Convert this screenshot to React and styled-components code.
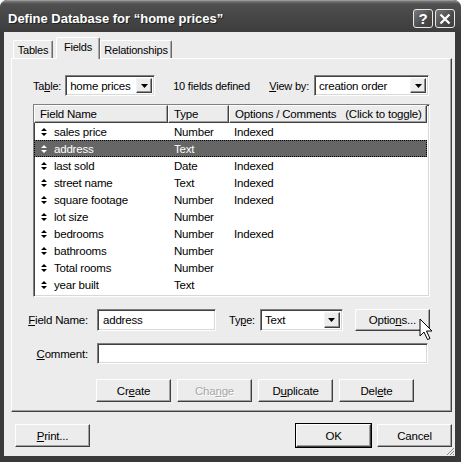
import React from "react";
import styled, { createGlobalStyle, css } from "styled-components";

const Global = createGlobalStyle`
  html, body { margin: 0; padding: 0; background: #ffffff; }
  body { font-family: "Liberation Sans", Arial, sans-serif; }
  * { box-sizing: border-box; }
`;

const FONT = `font-family: "Liberation Sans", Arial, sans-serif; font-size: 11px; letter-spacing: -0.2px; color: #000;`;

const Window = styled.div`
  width: 461px;
  height: 462px;
  background: #3a3a3a;
  border-radius: 7px 7px 0 0;
  display: flex;
  flex-direction: column;
  overflow: hidden;
`;

const TitleBar = styled.div`
  height: 32px;
  flex: none;
  display: flex;
  align-items: flex-start;
  justify-content: space-between;
  padding: 8px 6px 0 8px;
  background: linear-gradient(#7a7a7a 0px, #505050 3px, #474747 14px, #3f3f3f 28px, #3a3a3a 32px);
  border-radius: 7px 7px 0 0;
  border-top: 1px solid #9a9a9a;
`;

const TitleText = styled.div`
  font-family: "Liberation Sans", Arial, sans-serif;
  font-weight: bold;
  font-size: 13px;
  color: #fff;
  line-height: 19px;
  text-shadow: 1px 1px 0 #222;
`;

const TitleButtons = styled.div`
  display: flex;
  gap: 2px;
`;

const CaptionButton = styled.div`
  width: 20px;
  height: 19px;
  border: 1px solid #e8e8e8;
  border-radius: 3px;
  background: linear-gradient(135deg, #7a7a7a, #4a4a4a 60%, #3e3e3e);
  display: flex;
  align-items: center;
  justify-content: center;
  color: #fff;
  font-family: "Liberation Sans", Arial, sans-serif;
  font-weight: bold;
  font-size: 15px;
`;

const Body = styled.div`
  flex: 1;
  margin: 0 6px 6px 4px;
  background: #ececec;
  padding: 5px 3px 9px 7px;
  display: flex;
  flex-direction: column;
  position: relative;
`;

const TabStrip = styled.div`
  height: 21px;
  display: flex;
  align-items: flex-end;
  padding-left: 2px;
  position: relative;
  z-index: 2;
`;

const Tab = styled.div`
  ${FONT}
  height: ${(p) => (p.$active ? "22px" : "18px")};
  margin-bottom: ${(p) => (p.$active ? "-1px" : "0")};
  width: ${(p) => p.$w}px;
  margin-left: ${(p) => p.$ml || 0}px;
  background: #ececec;
  border-top: 1px solid #fff;
  border-left: 1px solid #fff;
  border-right: 1px solid #6a6a6a;
  box-shadow: inset -1px 0 #a8a8a8;
  border-radius: 2px 2px 0 0;
  display: flex;
  justify-content: center;
  padding-top: ${(p) => (p.$active ? "3px" : "3px")};
  line-height: 13px;
`;

const Panel = styled.div`
  height: 354px;
  flex: none;
  border-top: 1px solid #fff;
  border-left: 1px solid #fff;
  border-right: 1px solid #404040;
  border-bottom: 1px solid #404040;
  box-shadow: inset -1px -1px #a0a0a0;
  padding: 16px 22px 0 21px;
  display: flex;
  flex-direction: column;
`;

const TopRow = styled.div`
  height: 21px;
  display: flex;
  align-items: center;
`;

const Label = styled.span`
  ${FONT}
  white-space: nowrap;
  margin-right: ${(p) => p.$mr || 0}px;
  margin-left: ${(p) => p.$ml || 0}px;
`;

const U = styled.span`
  text-decoration: underline;
  text-underline-offset: 1px;
`;

const Sunken = css`
  background: #fff;
  border: 1px solid;
  border-color: #808080 #ffffff #ffffff #808080;
  box-shadow: inset 1px 1px #404040, inset -1px -1px #d8d8d8;
`;

const Combo = styled.div`
  ${Sunken}
  width: ${(p) => p.$w}px;
  height: ${(p) => p.$h || 21}px;
  display: flex;
  align-items: center;
  padding: 2px 2px 2px 4px;
  margin-left: ${(p) => p.$ml || 0}px;
  flex: none;
`;

const ComboText = styled.span`
  ${FONT}
  font-size: 11.5px;
  flex: 1;
  white-space: nowrap;
`;

const DropButton = styled.div`
  width: 16px;
  height: 100%;
  background: #ececec;
  border: 1px solid;
  border-color: #f4f4f4 #404040 #404040 #f4f4f4;
  box-shadow: inset -1px -1px #909090;
  display: flex;
  align-items: center;
  justify-content: center;
`;

const Arrow = () => (
  <svg width="7" height="4" viewBox="0 0 7 4">
    <path d="M0 0 H7 L3.5 4 Z" fill="#000" />
  </svg>
);

const Spacer = styled.div`
  flex: 1;
`;

const ListBox = styled.div`
  ${Sunken}
  margin-top: 8px;
  width: 397px;
  height: 193px;
  padding: 0;
  overflow: hidden;
`;

const HeaderRow = styled.div`
  display: flex;
  height: 18px;
`;

const HeaderCell = styled.div`
  ${FONT}
  font-size: 11.5px;
  width: ${(p) => p.$w}px;
  background: #ececec;
  border: 1px solid;
  border-color: #fff #404040 #404040 #fff;
  box-shadow: inset -1px -1px #a0a0a0;
  padding-left: 5px;
  padding-top: 1px;
  line-height: 14px;
  white-space: nowrap;
`;

const Row = styled.div`
  display: flex;
  align-items: center;
  height: 17px;
  background: ${(p) => (p.$sel ? "#666666" : "transparent")};
  outline: ${(p) => (p.$sel ? "1px dotted #000" : "none")};
  outline-offset: -1px;
  margin-right: 2px;
`;

const Cell = styled.div`
  ${FONT}
  font-size: 11.5px;
  color: ${(p) => (p.$sel ? "#fff" : "#000")};
  width: ${(p) => p.$w}px;
  padding-left: ${(p) => p.$pl}px;
  white-space: nowrap;
  display: flex;
  align-items: center;
`;

const Mover = ({ color }) => (
  <svg width="6" height="8" viewBox="0 0 6 8" style={{ marginRight: 7 }}>
    <path d="M3 0 L6 3 H0 Z M0 5 H6 L3 8 Z" fill={color} />
  </svg>
);

const FormGrid = styled.div`
  display: grid;
  grid-template-columns: 64px auto;
  row-gap: 12px;
  margin-top: 12px;
`;

const FormLabel = styled.div`
  ${FONT}
  font-size: 11.5px;
  padding-right: 9px;
  display: flex;
  align-items: center;
  justify-content: flex-end;
  white-space: nowrap;
`;

const FieldLine = styled.div`
  display: flex;
  align-items: center;
  height: ${(p) => p.$h || 22}px;
`;

const TextInput = styled.div`
  ${Sunken}
  ${FONT}
  font-size: 11.5px;
  width: ${(p) => p.$w}px;
  height: ${(p) => p.$h}px;
  padding: 4px 0 0 5px;
  white-space: nowrap;
`;

const ButtonBase = styled.div`
  ${FONT}
  font-size: 11.5px;
  width: 75px;
  height: ${(p) => p.$h || 23}px;
  background: #ececec;
  border: 1px solid;
  border-color: #fff #404040 #404040 #fff;
  box-shadow: inset -1px -1px #a0a0a0;
  display: flex;
  align-items: center;
  justify-content: center;
  white-space: nowrap;
  position: relative;
  color: ${(p) => (p.$disabled ? "#a8a8a8" : "#000")};
  text-shadow: ${(p) => (p.$disabled ? "1px 1px 0 #fff" : "none")};
  ${(p) =>
    p.$default &&
    css`
      outline: 1px solid #000;
      outline-offset: 0;
    `}
  margin-left: ${(p) => p.$ml || 0}px;
`;

const ButtonRow = styled.div`
  display: flex;
  gap: 6px;
  margin-top: 15px;
  padding-left: 63px;
`;

const BottomRow = styled.div`
  margin-top: 12px;
  display: flex;
  justify-content: space-between;
  padding-left: 4px;
`;

const RightGroup = styled.div`
  display: flex;
  gap: 6px;
`;

const Pointer = styled.svg`
  position: absolute;
  left: 63px;
  top: 8px;
  z-index: 5;
`;

const Grip = styled.svg`
  position: absolute;
  right: 0;
  bottom: 0;
`;

const fields = [
  ["sales price", "Number", "Indexed"],
  ["address", "Text", ""],
  ["last sold", "Date", "Indexed"],
  ["street name", "Text", "Indexed"],
  ["square footage", "Number", "Indexed"],
  ["lot size", "Number", ""],
  ["bedrooms", "Number", "Indexed"],
  ["bathrooms", "Number", ""],
  ["Total rooms", "Number", ""],
  ["year built", "Text", ""],
];

export default function App() {
  return (
    <>
      <Global />
      <Window>
        <TitleBar>
          <TitleText>Define Database for “home prices”</TitleText>
          <TitleButtons>
            <CaptionButton>?</CaptionButton>
            <CaptionButton>
              <svg width="12" height="12" viewBox="0 0 12 12">
                <path d="M1.5 1.5 L10.5 10.5 M10.5 1.5 L1.5 10.5" stroke="#fff" strokeWidth="2.2" />
              </svg>
            </CaptionButton>
          </TitleButtons>
        </TitleBar>
        <Body>
          <TabStrip>
            <Tab $w={40}>Tables</Tab>
            <Tab $w={44} $ml={3} $active>Fields</Tab>
            <Tab $w={72}>Relationships</Tab>
          </TabStrip>
          <Panel>
            <TopRow>
              <Label $mr={4}>
                Ta<U>b</U>le:
              </Label>
              <Combo $w={90}>
                <ComboText>home prices</ComboText>
                <DropButton>
                  <Arrow />
                </DropButton>
              </Combo>
              <Label $ml={18}>10 fields defined</Label>
              <Spacer />
              <Label $mr={5}>
                <U>V</U>iew by:
              </Label>
              <Combo $w={115}>
                <ComboText>creation order</ComboText>
                <DropButton>
                  <Arrow />
                </DropButton>
              </Combo>
            </TopRow>
            <ListBox>
              <HeaderRow>
                <HeaderCell $w={134}>Field Name</HeaderCell>
                <HeaderCell $w={61}>Type</HeaderCell>
                <HeaderCell $w={198}>Options / Comments &nbsp;&nbsp;(Click to toggle)</HeaderCell>
              </HeaderRow>
              {fields.map(([name, type, opt], i) => {
                const sel = i === 1;
                return (
                  <Row key={name} $sel={sel}>
                    <Cell $w={134} $pl={7} $sel={sel}>
                      <Mover color={sel ? "#fff" : "#000"} />
                      {name}
                    </Cell>
                    <Cell $w={61} $pl={6} $sel={sel}>{type}</Cell>
                    <Cell $w={197} $pl={5} $sel={sel}>{opt}</Cell>
                  </Row>
                );
              })}
            </ListBox>
            <FormGrid>
              <FormLabel>
                <span>
                  <U>F</U>ield Name:
                </span>
              </FormLabel>
              <FieldLine>
                <TextInput $w={119} $h={22}>address</TextInput>
                <Label $ml={13} $mr={5}>
                  Ty<U>p</U>e:
                </Label>
                <Combo $w={83} $h={22}>
                  <ComboText>Text</ComboText>
                  <DropButton>
                    <Arrow />
                  </DropButton>
                </Combo>
                <ButtonBase $ml={12} $h={22}>
                  Optio<U>n</U>s...
                  <Pointer width="14" height="24" viewBox="0 0 14 24">
                    <path
                      d="M1 1 L1 18 L5 14 L8.5 21.5 L11 20.5 L7.5 13 L13 13 Z"
                      fill="#fff"
                      stroke="#000"
                      strokeWidth="1"
                    />
                  </Pointer>
                </ButtonBase>
              </FieldLine>
              <FormLabel>
                <span>
                  <U>C</U>omment:
                </span>
              </FormLabel>
              <FieldLine $h={21}>
                <TextInput $w={331} $h={21} />
              </FieldLine>
            </FormGrid>
            <ButtonRow>
              <ButtonBase>
                Cr<U>e</U>ate
              </ButtonBase>
              <ButtonBase $disabled>
                Cha<U>n</U>ge
              </ButtonBase>
              <ButtonBase>
                D<U>u</U>plicate
              </ButtonBase>
              <ButtonBase>
                Del<U>e</U>te
              </ButtonBase>
            </ButtonRow>
          </Panel>
          <BottomRow>
            <ButtonBase>
              <U>P</U>rint...
            </ButtonBase>
            <RightGroup>
              <ButtonBase $default>OK</ButtonBase>
              <ButtonBase>Cancel</ButtonBase>
            </RightGroup>
          </BottomRow>
          <Grip width="10" height="10" viewBox="0 0 10 10">
            <path d="M9 2 L2 9 M9 5 L5 9 M9 8 L8 9" stroke="#8a8a8a" strokeWidth="1" />
          </Grip>
        </Body>
      </Window>
    </>
  );
}
